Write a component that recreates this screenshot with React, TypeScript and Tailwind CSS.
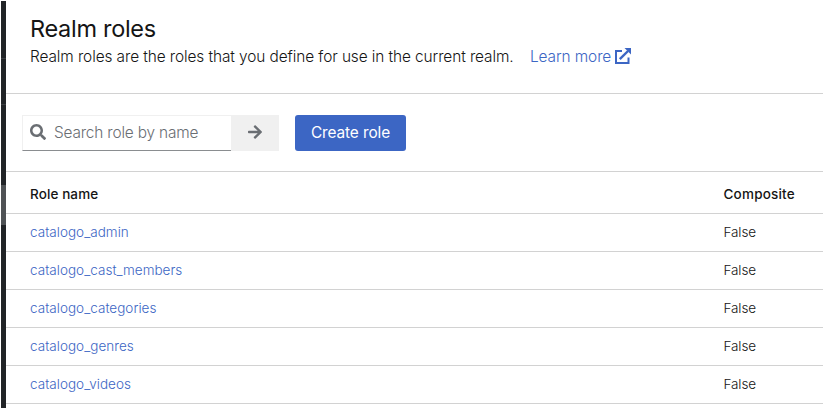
import React from "react";
import { FaSearch, FaArrowRight } from "react-icons/fa";

const roles = [
  "catalogo_admin",
  "catalogo_cast_members",
  "catalogo_categories",
  "catalogo_genres",
  "catalogo_videos",
];

function ExternalLink() {
  return (
    <svg className="mb-px h-4 w-4 shrink-0 text-[#3c66c4]" viewBox="0 0 16 16" fill="none" stroke="currentColor" strokeWidth="2">
      <path d="M7 3H1V15h12.5V9.5" />
      <path d="M4.8 11.2L13 3" strokeWidth="2.4" />
      <path d="M9.5 0H16v6.5z" fill="currentColor" stroke="none" />
    </svg>
  );
}

export default function App() {
  return (
    <div className="flex h-[409px] w-[824px] bg-white py-px pl-px pr-px font-['Inter',sans-serif] text-[#151515]">
      <aside className="flex h-[407px] w-[5px] shrink-0 flex-col bg-[#212427]">
        <div className="h-[58px] border-b border-[#3c3f42]" />
        <div className="h-[46px] border-b border-[#3c3f42]" />
        <div className="mt-20 h-10 bg-[#4f5255]" />
      </aside>
      <main className="h-[407px] flex-1 whitespace-nowrap">
        <header className="h-[93px] border-b border-[#d2d2d2] pl-6 pt-3">
          <h1 className="h-8 text-[23.5px] leading-8 tracking-[-0.3px]">Realm roles</h1>
          <div className="flex h-[23px] text-[15.4px] font-light leading-[23px] tracking-[-0.085px]">
            <p className="w-[500px]">Realm roles are the roles that you define for use in the current realm.</p>
            <a className="flex items-center gap-1 text-[#3c66c4]">
              <span className="w-[81px]">Learn more</span>
              <ExternalLink />
            </a>
          </div>
        </header>
        <div className="flex h-[78px] border-b border-[#d2d2d2] pl-4 pt-[21px]">
          <div className="flex h-9 w-[209px] items-center border-b border-l border-t border-b-[#8a8d90] border-l-[#f0f0f0] border-t-[#f0f0f0] pb-px pl-[7px] text-[#6a6e73]">
            <FaSearch className="mb-px h-4 w-4" />
            <span className="ml-2 text-[15.4px] font-light tracking-[-0.17px]">Search role by name</span>
          </div>
          <button className="flex h-9 w-12 items-center justify-center bg-[#f0f0f0] pb-0.5 text-[#6a6e73]">
            <FaArrowRight className="h-4 w-4" />
          </button>
          <button className="ml-4 flex h-9 w-[111px] items-center justify-center rounded-[3px] bg-[#3c66c4] pb-px text-[15.4px] tracking-[-0.1px] text-white">
            Create role
          </button>
        </div>
        <div className="flex h-[42px] items-center border-b border-[#d2d2d2] pl-6 pt-[3px] text-[13.5px] font-medium">
          <span className="w-[693.5px] tracking-[0.1px]">Role name</span>
          <span className="tracking-[0.2px]">Composite</span>
        </div>
        {roles.map((name) => (
          <div key={name} className="flex h-[38px] items-center border-b border-[#d2d2d2] pb-px pl-6 text-[13.5px] font-light">
            <span className="w-[693.5px]">
              <a className="tracking-[0.03px] text-[#3c66c4]">{name}</a>
            </span>
            <span className="tracking-[-0.1px]">False</span>
          </div>
        ))}
      </main>
    </div>
  );
}
